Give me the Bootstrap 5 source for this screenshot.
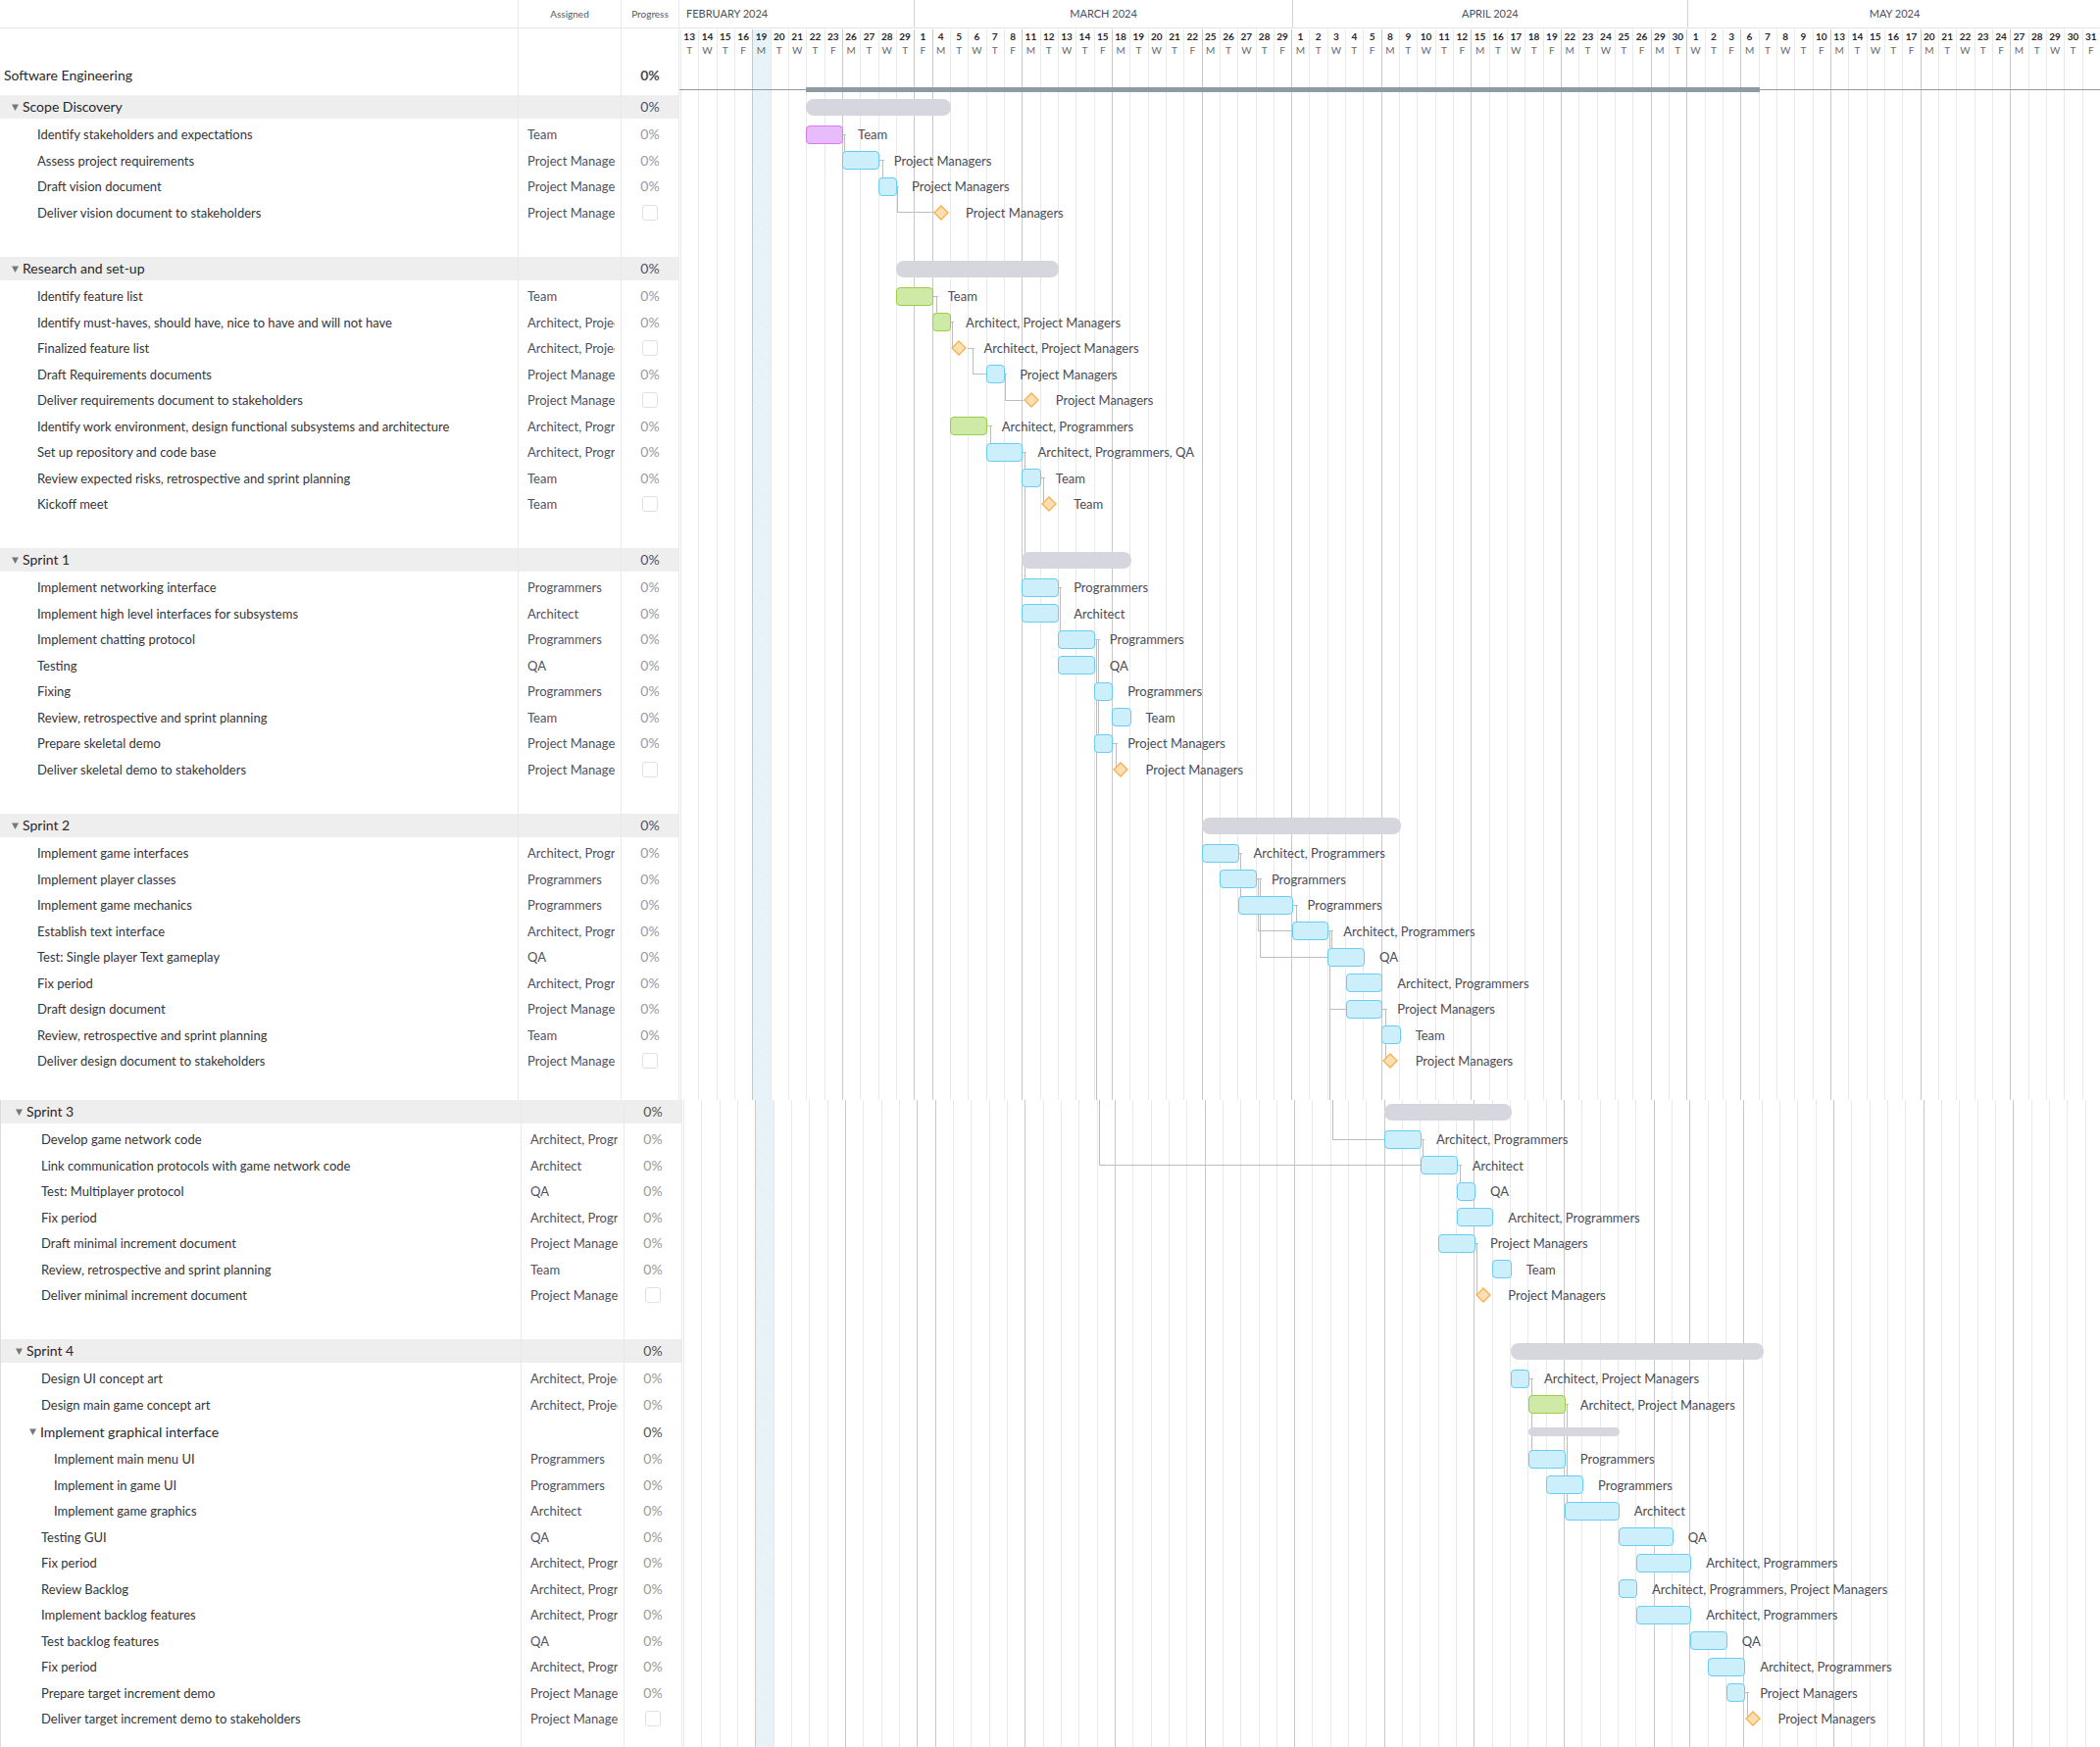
<!DOCTYPE html>
<html lang="en">
<head>
<meta charset="utf-8">
<meta name="viewport" content="width=device-width, initial-scale=1">
<title>Software Engineering – Gantt chart</title>
<link href="https://cdn.jsdelivr.net/npm/bootstrap@5.3.0/dist/css/bootstrap.min.css" rel="stylesheet">
<style>
  :root { --day: calc((100vw - 693px) / 79); --rule: #e9e9e9; --strong-rule: #c9c9c9; }
  body { font-family: Lato, "Liberation Sans", sans-serif; font-size: 13px; line-height: 18px; color: #33353a; background: #fff; overflow-x: hidden; }

  .plan { --left: 694px; }
  .plan-next { --left: 697px; }

  /* Sheet */
  .sheet { table-layout: fixed; width: 100%; border-collapse: separate; border-spacing: 0; z-index: 1; }
  .sheet td, .sheet th { padding: 0; font-weight: 400; white-space: nowrap; overflow: hidden; }
  .col-name { width: 529px; }
  .plan-next .col-name { width: 532px; }
  .col-assigned { width: 105px; }
  .col-progress { width: 59px; }
  .sheet .cell-name, .sheet .cell-assigned, .sheet .cell-progress { border-right: 1px solid var(--rule); }
  .plan-next .cell-name { border-left: 1px solid #dcdcdc; }
  .sheet .cell-name { padding-left: var(--indent, 0); }
  .plan-next .cell-name { padding-left: calc(var(--indent, 0px) + 3px); }
  .sheet .cell-assigned { padding: 0 6px 0 9px; color: #50525e; }
  .cell-progress { text-align: center; font-size: 14px; color: #9a9a9a; }
  .sheet .cell-lane { padding-left: 1px; overflow: visible; }
  .clip { overflow: hidden; }

  .head-row { height: 29px; }
  .head-row > * { border-bottom: 1px solid #e4e4e4; font-size: 10px; color: #555862; }
  .sheet .head-row .cell-assigned { padding: 0; color: #555862; }
  .head-row .cell-progress { font-size: 10px; color: #555862; }
  .days-row { height: 30px; }
  .project-row { height: 38px; font-size: 14px; color: #26282c; --indent: 4px; }
  .sheet .project-row .cell-name, .sheet .project-row .cell-progress { padding-bottom: 2px; }
  .project-row .cell-progress { font-weight: 700; color: #4a4c55; }
  .band-row { height: 24px; font-size: 14px; --indent: 12px; }
  .band-row .cell-name, .band-row .cell-assigned, .band-row .cell-progress { background: #eee; }
  .band-row .cell-name, .sub-row .cell-name { color: #26282c; }
  .band-row .cell-progress, .sub-row .cell-progress { color: #50525e; }
  .sub-row { height: 29px; font-size: 14px; --indent: 26px; }
  .after-band { height: 3px; }
  .task-row { height: 26px; --indent: 38px; }
  .task-row.roomy { height: 27px; }
  .task-row.deep { --indent: 51px; }
  .gap-row { height: 32px; }
  .gap-cut { height: 27px; }
  .gap-end { height: 16px; }

  .fold { width: 11px; color: #777; line-height: 0; }
  .tick { width: 16px; height: 16px; margin: 0 auto; border: 1px solid #e0e0e0; border-radius: 3px; display: block; appearance: none; background: #fff; }
  .tick:checked { background: #68cdf2; }

  /* Calendar */
  .month { border-left: 1px solid #d4d4d4; width: calc(var(--day) * var(--n)); height: 28px; line-height: 28px; font-size: 11px; color: #4d505b; }
  .month-first { border-left: 0; padding-left: 6px; }
  .day { width: var(--day); font-size: 10px; line-height: 14px; text-align: center; color: #666972; }
  .day b { display: block; color: #26282c; }
  .grid-days { left: var(--left); top: 0; bottom: 0; }
  .plan-first .grid-days { top: 30px; }
  .grid-day { width: var(--day); border-left: 1px solid var(--rule); }
  .grid-strong { border-left-color: var(--strong-rule); }
  .grid-today { background: repeating-linear-gradient(45deg, #e4f0f6 0 1px, #e9f4f9 1px 3px); }
  .wires { left: 0; top: 0; width: 100%; height: 100%; }
  .wires path { fill: none; stroke: #bdbdbd; stroke-width: 1; shape-rendering: crispEdges; }

  /* Lanes */
  .lane { padding-left: calc(var(--day) * var(--from)); z-index: 2; }
  .task-bar, .summary-bar { width: calc(var(--day) * var(--n) + 1px); }
  .task-bar { height: 19px; border: 1px solid #68cdf2; border-radius: 4px; background: #cdeefb; }
  .task-bar.is-green { border-color: #97d044; background: #cfe9a6; }
  .task-bar.is-purple { border-color: #d57bf3; background: #e8bcfc; }
  .summary-bar { height: 17px; border-radius: 8px; background: #d6d6df; }
  .summary-bar.is-thin { height: 9px; }
  .milestone { width: calc(var(--day) * var(--n)); }
  .milestone svg { display: block; margin: 0 auto; }
  .who { margin-left: 15px; color: #4a4c57; }
  .milestone + .who { margin-left: 16px; }
  .span-line { height: 1px; background: #8f9ba3; }
  .span-bar { height: 5px; background: #8f9ba3; width: calc(var(--day) * 53); }
  .span-lead { width: calc(var(--day) * 7 + 1px); }
  .span-lane { margin-left: -1px; padding-top: 27px; }
</style>
<script src="https://cdn.jsdelivr.net/npm/bootstrap@5.3.0/dist/js/bootstrap.bundle.min.js"></script>
</head>
<body>
<main id="chart"></main>

<script>
// Working days only: [month label, first date, days in month, weekday of the first date (1 = Monday)]
const months = [["FEBRUARY 2024", 13, 29, 2], ["MARCH 2024", 1, 31, 5], ["APRIL 2024", 1, 30, 1], ["MAY 2024", 1, 31, 3]];
const letters = ["", "M", "T", "W", "T", "F"];
const today = 4;
const days = [];
months.forEach(m => {
  let wd = m[3];
  m.n = 0;
  for (let d = m[1]; d <= m[2]; d++) {
    if (wd <= 5) { days.push({ date: d, wd, strong: wd === 1 || d === 1 }); m.n++; }
    wd = wd % 7 + 1;
  }
});

const PM = "Project Managers", AR = "Architect", PR = "Programmers", QA = "QA", TM = "Team";
const AP = AR + ", " + PR, AM = AR + ", " + PM;

// Tasks: [name, assigned, first day, length, kind]
const plans = [
  [
    { name: "Scope Discovery", from: 7, n: 8, tasks: [
      ["Identify stakeholders and expectations", TM, 7, 2, "purple"],
      ["Assess project requirements", PM, 9, 2],
      ["Draft vision document", PM, 11, 1],
      ["Deliver vision document to stakeholders", PM, 14, 1, "milestone"]] },
    { name: "Research and set-up", from: 12, n: 9, tasks: [
      ["Identify feature list", TM, 12, 2, "green"],
      ["Identify must-haves, should have, nice to have and will not have", AM, 14, 1, "green"],
      ["Finalized feature list", AM, 15, 1, "milestone"],
      ["Draft Requirements documents", PM, 17, 1],
      ["Deliver requirements document to stakeholders", PM, 19, 1, "milestone"],
      ["Identify work environment, design functional subsystems and architecture", AP, 15, 2, "green"],
      ["Set up repository and code base", AP + ", " + QA, 17, 2],
      ["Review expected risks, retrospective and sprint planning", TM, 19, 1],
      ["Kickoff meet", TM, 20, 1, "milestone"]] },
    { name: "Sprint 1", from: 19, n: 6, tasks: [
      ["Implement networking interface", PR, 19, 2],
      ["Implement high level interfaces for subsystems", AR, 19, 2],
      ["Implement chatting protocol", PR, 21, 2],
      ["Testing", QA, 21, 2],
      ["Fixing", PR, 23, 1],
      ["Review, retrospective and sprint planning", TM, 24, 1],
      ["Prepare skeletal demo", PM, 23, 1],
      ["Deliver skeletal demo to stakeholders", PM, 24, 1, "milestone"]] },
    { name: "Sprint 2", from: 29, n: 11, tasks: [
      ["Implement game interfaces", AP, 29, 2],
      ["Implement player classes", PR, 30, 2],
      ["Implement game mechanics", PR, 31, 3],
      ["Establish text interface", AP, 34, 2],
      ["Test: Single player Text gameplay", QA, 36, 2],
      ["Fix period", AP, 37, 2],
      ["Draft design document", PM, 37, 2],
      ["Review, retrospective and sprint planning", TM, 39, 1],
      ["Deliver design document to stakeholders", PM, 39, 1, "milestone"]] }
  ],
  [
    { name: "Sprint 3", from: 39, n: 7, tasks: [
      ["Develop game network code", AP, 39, 2],
      ["Link communication protocols with game network code", AR, 41, 2],
      ["Test: Multiplayer protocol", QA, 43, 1],
      ["Fix period", AP, 43, 2],
      ["Draft minimal increment document", PM, 42, 2],
      ["Review, retrospective and sprint planning", TM, 45, 1],
      ["Deliver minimal increment document", PM, 44, 1, "milestone"]] },
    { name: "Sprint 4", from: 46, n: 14, tasks: [
      ["Design UI concept art", AM, 46, 1],
      ["Design main game concept art", AM, 47, 2, "green"],
      ["Implement graphical interface", "", 47, 5, "group"],
      ["Implement main menu UI", PR, 47, 2, "deep"],
      ["Implement in game UI", PR, 48, 2, "deep"],
      ["Implement game graphics", AR, 49, 3, "deep"],
      ["Testing GUI", QA, 52, 3],
      ["Fix period", AP, 53, 3],
      ["Review Backlog", AP + ", " + PM, 52, 1],
      ["Implement backlog features", AP, 53, 3],
      ["Test backlog features", QA, 56, 2],
      ["Fix period", AP, 57, 2],
      ["Prepare target increment demo", PM, 58, 1],
      ["Deliver target increment demo to stakeholders", PM, 59, 1, "milestone"]] }
  ]
];

// Dependencies: [from row, to row, day where the source ends, px after it, day where the target starts or null]
// A row is "group.task"; "top" and "bottom" are the edges of the plan.
const wires = [
  [["0.0","0.1",9,3],["0.1","0.2",11,5],["0.2","0.3",12,2,14],
   ["1.0","1.1",14,5],["1.1","1.2",15,3],["1.2","1.3",16,5,17],["1.3","1.4",18,2,19],["1.5","1.6",17,5],
   ["1.6","2.0",19,3],["1.7","1.8",20,4],
   ["2.0","2.2",21,3],["2.2","2.6",23,5],["2.2","bottom",23,3],["2.6","2.7",24,5],
   ["3.0","3.2",31,3],["3.1","3.3",32,3,34],["3.1","3.4",32,5,36],["3.2","3.3",34,5],
   ["3.3","3.4",36,5],["3.3","3.6",36,3,37],["3.3","bottom",36,3],["3.6","3.8",39,5]],
  [["top","0.0",36,3,39],["top","0.1",23,3,41],["0.0","0.1",41,3],["0.1","0.2",43,4],["0.4","0.6",44,3],
   ["1.0","1.3",47,4],["1.1","1.5",49,3],["1.12","1.13",59,4]]
];

const cells = (name, who, progress, lane) => `
  <td class="cell-name">${name}</td><td class="cell-assigned"><div class="clip">${who}</div></td>
  <td class="cell-progress">${progress}</td><td class="cell-lane">${lane}</td>`;
const blank = cls => `<tr class="${cls}">${cells("", "", "", "")}</tr>`;
const title = name => `<div class="d-flex align-items-center">
  <button type="button" class="fold btn p-0 border-0 text-start" aria-label="Collapse ${name}"><svg width="7" height="7" viewBox="0 0 7 7"><path d="M0 .5h7L3.500 7z" fill="currentColor"/></svg></button><span>${name}</span></div>`;
const summary = (from, n, thin) => `<div class="lane d-flex align-items-center" style="--from:${from};--n:${n}"><div class="summary-bar ${thin}"></div></div>`;

function taskRow(t, id, roomy) {
  const [name, who, from, n, kind = ""] = t;
  if (kind === "group") return `<tr class="sub-row" data-id="${id}">${cells(title(name), "", "0%", summary(from, n, "is-thin"))}</tr>`;
  const mile = kind === "milestone";
  const mark = mile
    ? `<div class="milestone flex-shrink-0"><svg width="16" height="16" viewBox="0 0 16 16"><path d="M8 1 15 8 8 15 1 8z" fill="#fddfb2" stroke="#f8ae4c" stroke-width="1.300"/></svg></div>`
    : `<div class="task-bar flex-shrink-0 is-${kind}"></div>`;
  const progress = mile ? `<input type="checkbox" class="tick" aria-label="${name}">` : "0%";
  const lane = `<div class="lane position-relative d-flex align-items-center" style="--from:${from};--n:${n}">${mark}<span class="who">${who}</span></div>`;
  return `<tr class="task-row ${kind === "deep" ? "deep" : ""} ${roomy ? "roomy" : ""}" data-id="${id}">${cells(name, who, progress, lane)}</tr>`;
}

function groupRows(g, gi) {
  let count = 0;
  return `<tr class="band-row">${cells(title(g.name), "", "0%", summary(g.from, g.n, ""))}</tr>` + blank("after-band") +
    g.tasks.map((t, ti) => {
      if (t[4] === "group") { count = 0; return taskRow(t, gi + "." + ti); }
      return taskRow(t, gi + "." + ti, count++ % 2 === 1);
    }).join("");
}

const head = `<thead>
  <tr class="head-row"><th class="cell-name" aria-label="Task"></th><th class="cell-assigned text-center">Assigned</th><th class="cell-progress">Progress</th>
    <th class="cell-lane"><div class="d-flex">${months.map((m, i) => `<div class="month flex-shrink-0 ${i ? "text-center" : "month-first text-start"}" style="--n:${m.n}">${m[0]}</div>`).join("")}</div></th></tr>
  <tr class="days-row">${cells("", "", "", `<div class="d-flex">${days.map(d => `<div class="day flex-shrink-0"><b>${d.date}</b>${letters[d.wd]}</div>`).join("")}</div>`)}</tr>
  <tr class="project-row">${cells("Software Engineering", "", "0%", `<div class="span-lane d-flex align-items-center"><div class="span-line span-lead"></div><div class="span-bar"></div><div class="span-line flex-grow-1"></div></div>`)}</tr>
</thead>`;

document.getElementById("chart").innerHTML = plans.map((groups, p) => `
  <section class="plan ${p ? "plan-next" : "plan-first"} position-relative overflow-hidden">
    <div class="grid-days position-absolute d-flex">${days.map((d, i) => `<div class="grid-day flex-shrink-0 ${d.strong ? "grid-strong" : ""} ${i === today ? "grid-today" : ""}"></div>`).join("")}</div>
    <svg class="wires position-absolute"></svg>
    <table class="sheet position-relative">
      <colgroup><col class="col-name"><col class="col-assigned"><col class="col-progress"><col></colgroup>
      ${p ? "" : head}
      <tbody>${groups.map(groupRows).join(blank("gap-row"))}${blank(p ? "gap-end" : "gap-cut")}</tbody>
    </table>
  </section>`).join("");

function drawWires() {
  document.querySelectorAll(".plan").forEach((plan, p) => {
    const day = plan.querySelector(".grid-day").getBoundingClientRect().width;
    const left = plan.querySelector(".grid-days").offsetLeft;
    const mid = id => {
      if (id === "top") return 0;
      if (id === "bottom") return plan.clientHeight;
      const row = plan.querySelector(`[data-id="${id}"]`);
      return row.offsetTop + Math.floor(row.offsetHeight / 2);
    };
    plan.querySelector(".wires").innerHTML = wires[p].map(([a, b, end, dx, to]) => {
      const x0 = left + end * day, x = Math.floor(x0 + dx) + .5, y0 = mid(a) + .5, y1 = mid(b) + .5;
      const start = a === "top" ? `M${x} 0` : `M${x0} ${y0}H${x + 1}M${x} ${y0}`;
      return `<path d="${start}V${y1}${to ? `H${left + to * day + 2}` : ""}"/>`;
    }).join("");
  });
}
drawWires();
window.addEventListener("resize", drawWires);
</script>
</body>
</html>
